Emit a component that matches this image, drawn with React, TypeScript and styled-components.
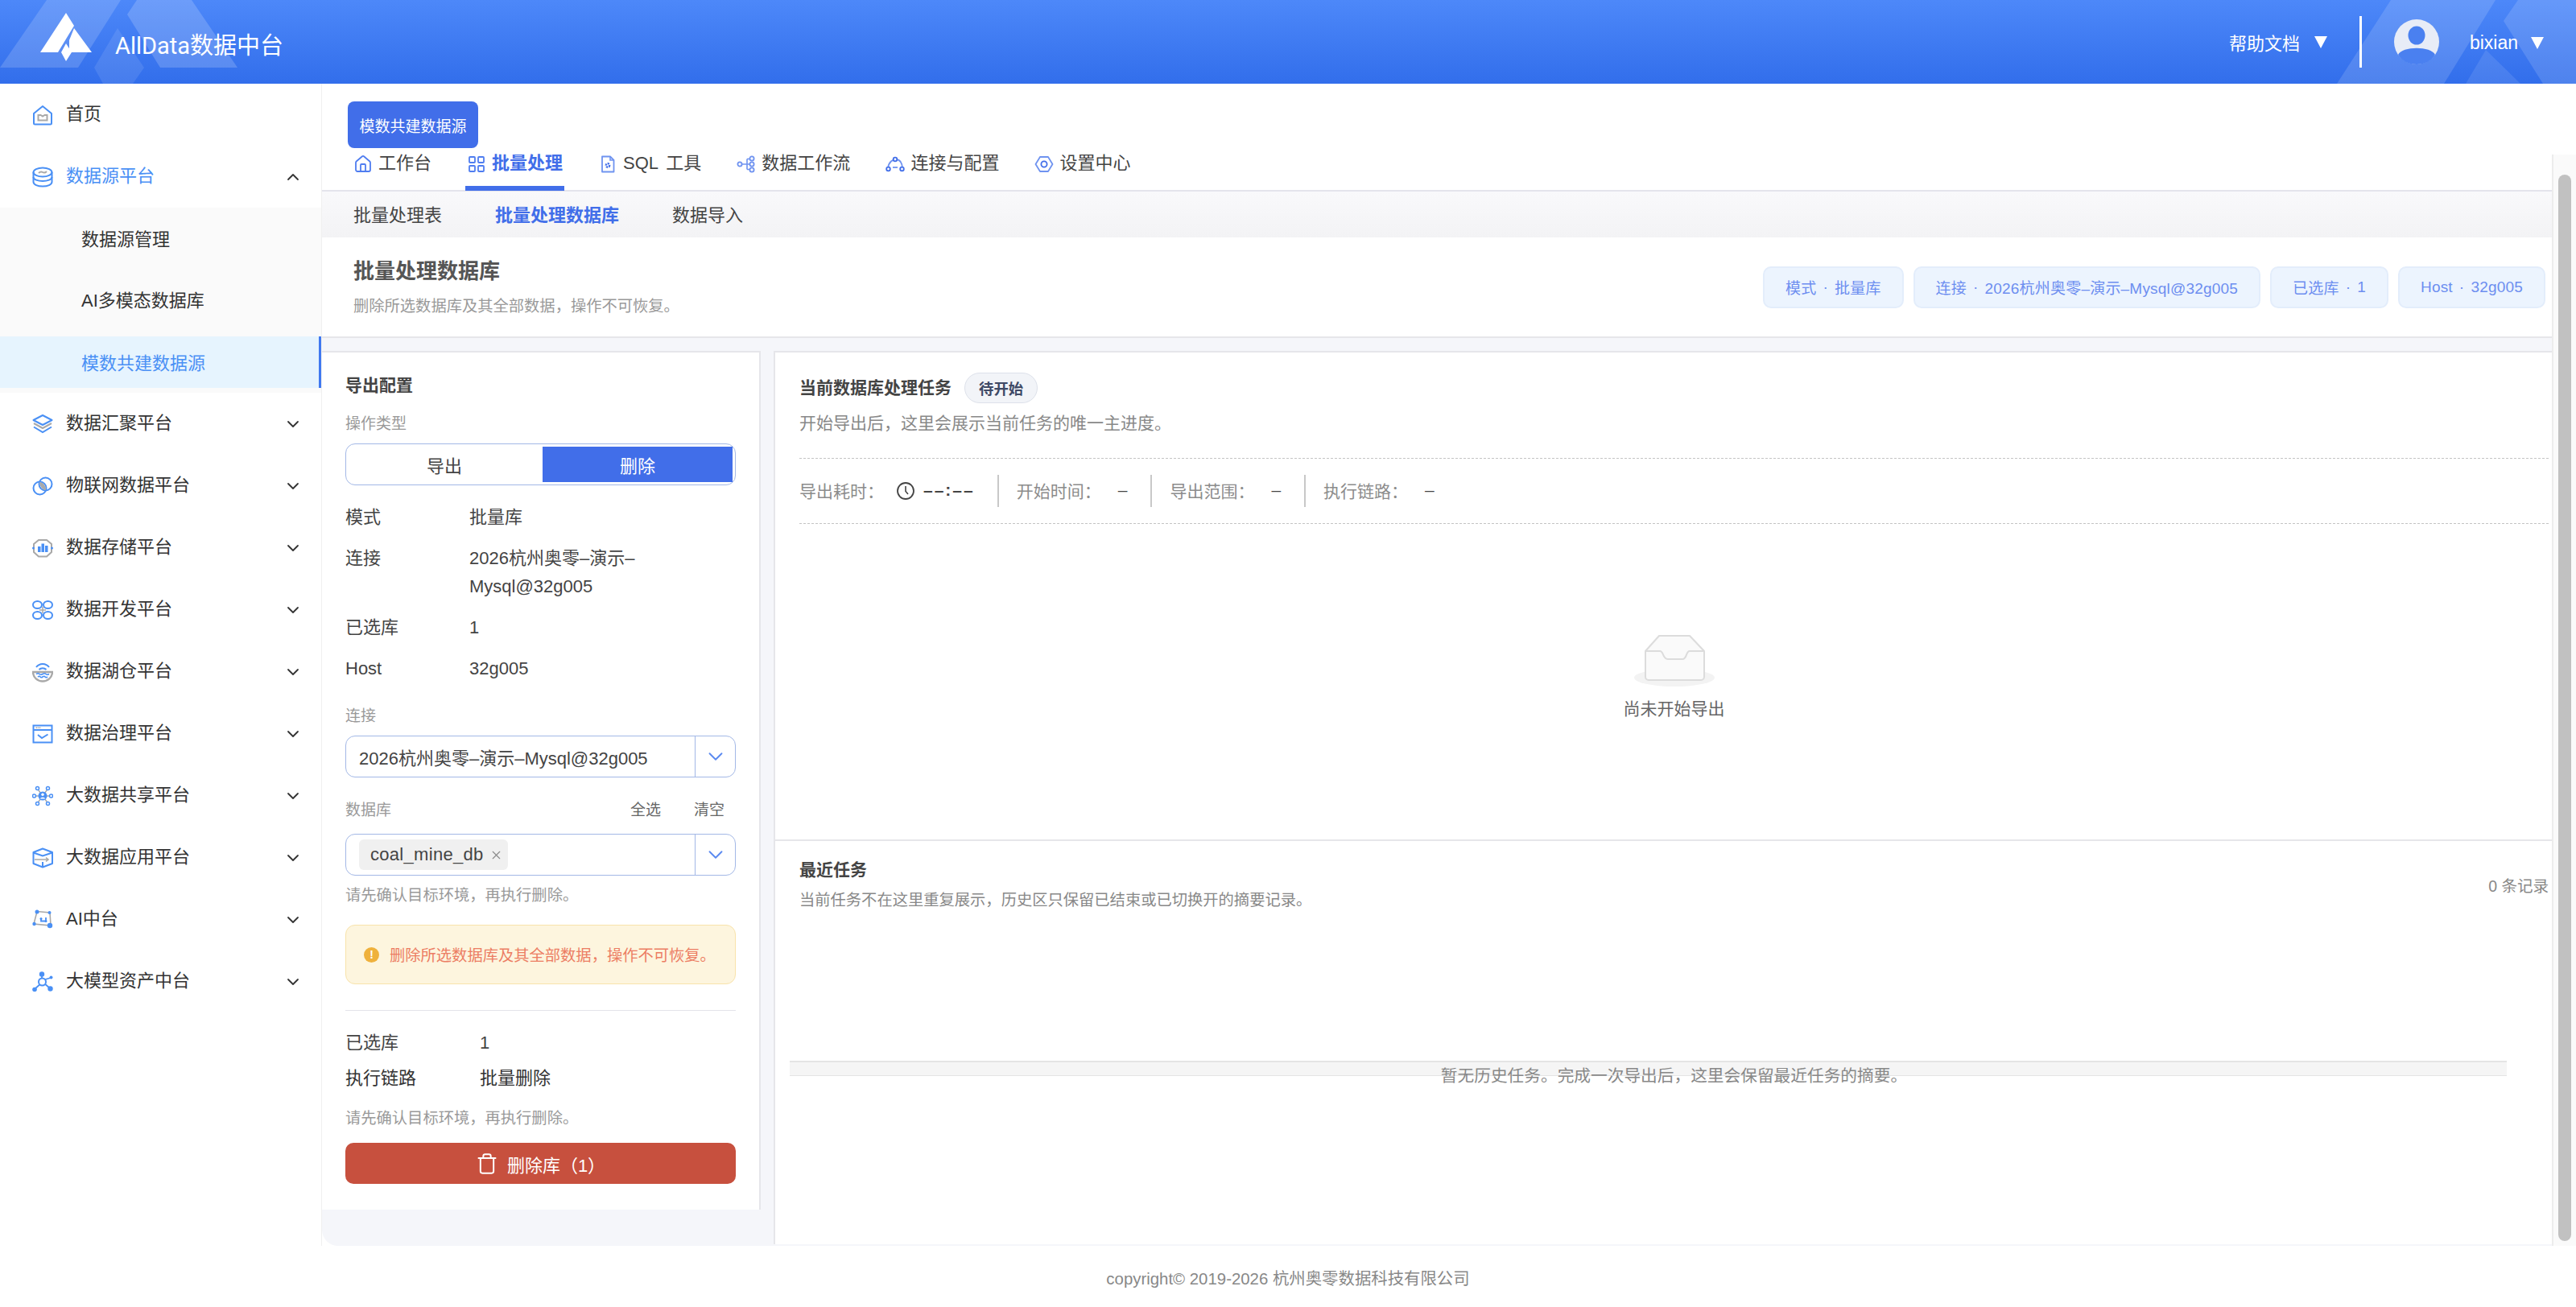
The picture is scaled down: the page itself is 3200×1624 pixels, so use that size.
import React from 'react'
import styled, { createGlobalStyle } from 'styled-components'
import { House, LayoutGrid, ChevronDown, ChevronUp, Trash, X } from 'lucide-react'

const FONT = `"Liberation Sans", "Noto Sans CJK SC", sans-serif`
const BLUE = '#4a90f5'
const GRAY = '#a9a9a9'

const GlobalStyle = createGlobalStyle`
  html, body {
    margin: 0;
    padding: 0;
    background: #fff;
    font-family: ${FONT};
  }
  * {
    box-sizing: border-box;
  }
`

const sideIcons: Record<string, React.ReactNode> = {
  home: (
    <>
      <path d="M2 11 L13 2 L24 11 V23 a1.5 1.5 0 0 1 -1.5 1.5 H3.5 A1.5 1.5 0 0 1 2 23 Z" fill="none" stroke={BLUE} strokeWidth="2" strokeLinejoin="round" />
      <path d="M7.5 13 h3 l2.5 1.5 l2.5 -1.5 h3 v6.5 h-11 Z" fill="none" stroke={GRAY} strokeWidth="2" />
    </>
  ),
  db: (
    <>
      <ellipse cx="13" cy="7" rx="11.5" ry="5.5" fill="none" stroke={BLUE} strokeWidth="2" />
      <path d="M8 8 q2.5 -2.5 5 -1 t5 -1" fill="none" stroke={GRAY} strokeWidth="2" />
      <path d="M1.5 7 V13 C1.5 16 7 18 13 18 S24.5 16 24.5 13 V7" fill="none" stroke={BLUE} strokeWidth="2" />
      <path d="M1.5 13 V19 C1.5 22.5 7 24.5 13 24.5 S24.5 22.5 24.5 19 V13" fill="none" stroke={BLUE} strokeWidth="2" />
    </>
  ),
  layers: (
    <>
      <path d="M13 2 L24.5 8 L13 14 L1.5 8 Z" fill="none" stroke={BLUE} strokeWidth="2" strokeLinejoin="round" />
      <path d="M2 12 L13 18 L24 12" fill="none" stroke={GRAY} strokeWidth="2" />
      <path d="M2 16.5 L13 23 L24 16.5" fill="none" stroke={BLUE} strokeWidth="2" />
    </>
  ),
  iot: (
    <>
      <circle cx="9.5" cy="15.5" r="8" fill="none" stroke={BLUE} strokeWidth="2" />
      <circle cx="16.5" cy="10.5" r="8" fill="none" stroke={BLUE} strokeWidth="2" />
      <path d="M9 8 C13 8 17 12 17 18 C13 18 9 13 9 8 Z" fill={GRAY} />
    </>
  ),
  storage: (
    <>
      <path d="M8 3 H18 L24 8 V18 L18 23.5 H8 L2 18 V8 Z" fill="none" stroke={GRAY} strokeWidth="2" />
      <rect x="7" y="11" width="3.5" height="7" fill={BLUE} />
      <rect x="11.5" y="7.5" width="3.5" height="10.5" fill={BLUE} />
      <rect x="16" y="10" width="3.5" height="8" fill={BLUE} />
      <circle cx="1.5" cy="13" r="1.5" fill={BLUE} />
      <circle cx="24.5" cy="13" r="1.5" fill={BLUE} />
    </>
  ),
  dev: (
    <>
      <ellipse cx="6.5" cy="6.5" rx="5.5" ry="4.5" fill="none" stroke={BLUE} strokeWidth="2" />
      <ellipse cx="19.5" cy="6.5" rx="5.5" ry="4.5" fill="none" stroke={BLUE} strokeWidth="2" />
      <ellipse cx="6.5" cy="19.5" rx="5.5" ry="4.5" fill="none" stroke={BLUE} strokeWidth="2" />
      <ellipse cx="19.5" cy="19.5" rx="5.5" ry="4.5" fill="none" stroke={BLUE} strokeWidth="2" />
      <path d="M13 9 V17 M9 13 H17" stroke={GRAY} strokeWidth="1.5" />
    </>
  ),
  lake: (
    <>
      <path d="M5 7 C9 1.5 17 1.5 21 7" fill="none" stroke={BLUE} strokeWidth="2" />
      <path d="M8.5 10 C11 7.5 15 7.5 17.5 10" fill="none" stroke={BLUE} strokeWidth="2" />
      <path d="M1 13 H25 C25 20 19 24.5 13 24.5 S1 20 1 13 Z" fill="none" stroke={GRAY} strokeWidth="2.4" />
      <path d="M5 15.5 q2.5 -1.5 4 0 t4 0 t4 0 t4 0" fill="none" stroke={BLUE} strokeWidth="1.6" />
      <path d="M7 19 q2 -1.5 3 0 t3 0 t3 0 t3 0" fill="none" stroke={BLUE} strokeWidth="1.6" />
    </>
  ),
  govern: (
    <>
      <rect x="1.5" y="2.5" width="23" height="21" fill="none" stroke={BLUE} strokeWidth="2" />
      <path d="M2 8 H24" stroke={BLUE} strokeWidth="2" />
      <path d="M4.5 5.3 H11" stroke={GRAY} strokeWidth="1.6" strokeDasharray="2 1" />
      <path d="M7 14 L12 18 L19.5 13.5" fill="none" stroke={BLUE} strokeWidth="2" />
    </>
  ),
  share: (
    <>
      <path d="M13 13 L6.5 4 M13 13 L19.5 4 M13 13 L3 13 M13 13 L23 13 M13 13 L6.5 22 M13 13 L19.5 22" stroke={GRAY} strokeWidth="1.4" />
      <circle cx="13" cy="13" r="5.5" fill={BLUE} />
      <circle cx="13" cy="11.3" r="1.7" fill="#fff" />
      <path d="M9.8 16.5 C10.5 14 15.5 14 16.2 16.5" fill="#fff" />
      {[[6.5, 3.5], [19.5, 3.5], [2.5, 13], [23.5, 13], [6.5, 22.5], [19.5, 22.5]].map(([cx, cy]) => (
        <circle key={`${cx}-${cy}`} cx={cx} cy={cy} r="2" fill="#fff" stroke={BLUE} strokeWidth="1.5" />
      ))}
    </>
  ),
  box: (
    <>
      <path d="M13 1.5 L25 6 V20 L13 24.5 L1.5 20 V6 Z" fill="none" stroke={BLUE} strokeWidth="2" strokeLinejoin="round" />
      <path d="M1.5 6.5 L13 10.5 L25 6.5 M13 18 V24" fill="none" stroke={BLUE} strokeWidth="2" />
      <path d="M3 15 H20 M17 12.5 L20 15 L17 17.5" fill="none" stroke={GRAY} strokeWidth="1.6" />
    </>
  ),
  ai: (
    <>
      <path d="M6 2.5 L22 4 L23 20 L2 18 Z" fill="none" stroke={GRAY} strokeWidth="1.6" />
      <path d="M11 12 L11 14.5 L17 14.5 L17 10" fill="none" stroke={BLUE} strokeWidth="1.8" />
      <circle cx="6" cy="3" r="2.5" fill={BLUE} />
      <circle cx="21.5" cy="4" r="2" fill={BLUE} />
      <circle cx="2.5" cy="18" r="2.2" fill={BLUE} />
      <circle cx="22" cy="20" r="3.2" fill={BLUE} />
      <circle cx="11" cy="11.5" r="1.5" fill={BLUE} />
      <circle cx="17" cy="14.5" r="1.5" fill={BLUE} />
    </>
  ),
  model: (
    <>
      <path d="M12 12 L12 4 M12 14 L3 22 M14 14 L22 21 M16 10 L23 8" stroke={BLUE} strokeWidth="1.8" />
      <circle cx="12.5" cy="13" r="4.5" fill="#fff" stroke={BLUE} strokeWidth="2" />
      <circle cx="12" cy="3.5" r="3.2" fill={BLUE} />
      <circle cx="3" cy="22.5" r="2.8" fill={BLUE} />
      <circle cx="22.5" cy="21.5" r="3.2" fill={BLUE} />
      <circle cx="23.5" cy="7.5" r="2" fill={BLUE} />
    </>
  ),
}

const navGroups = [
  { key: 'layers', label: '数据汇聚平台' },
  { key: 'iot', label: '物联网数据平台' },
  { key: 'storage', label: '数据存储平台' },
  { key: 'dev', label: '数据开发平台' },
  { key: 'lake', label: '数据湖仓平台' },
  { key: 'govern', label: '数据治理平台' },
  { key: 'share', label: '大数据共享平台' },
  { key: 'box', label: '大数据应用平台' },
  { key: 'ai', label: 'AI中台' },
  { key: 'model', label: '大模型资产中台' },
]

const SideIcon = ({ name }: { name: string }) => (
  <NavIcon viewBox="0 0 26 26">{sideIcons[name]}</NavIcon>
)

const DownCaret = () => <Caret />

const Sidebar = () => (
  <SideBar>
    <NavItem>
      <SideIcon name="home" />
      <span>首页</span>
    </NavItem>
    <NavItem $open>
      <SideIcon name="db" />
      <span>数据源平台</span>
      <Chevron as={ChevronUp} size={24} strokeWidth={1.8} />
    </NavItem>
    <SubMenu>
      <SubItem>数据源管理</SubItem>
      <SubItem>AI多模态数据库</SubItem>
      <SubItem $active>模数共建数据源</SubItem>
    </SubMenu>
    {navGroups.map((g) => (
      <NavItem key={g.key}>
        <SideIcon name={g.key} />
        <span>{g.label}</span>
        <Chevron as={ChevronDown} size={24} strokeWidth={1.8} />
      </NavItem>
    ))}
  </SideBar>
)

const TabFileIcon = () => (
  <TabSvg viewBox="0 0 24 24">
    <path d="M5 2.5 H15 L19.5 7 V21.5 H5 Z" fill="none" stroke="#6f93f0" strokeWidth="1.8" strokeLinejoin="round" />
    <path d="M15 2.5 V7 H19.5" fill="none" stroke="#6f93f0" strokeWidth="1.6" />
    <circle cx="12" cy="13.5" r="2.2" fill="none" stroke="#416ee9" strokeWidth="2.4" strokeDasharray="2 1" />
  </TabSvg>
)

const TabFlowIcon = () => (
  <TabSvg viewBox="0 0 24 24">
    <circle cx="4" cy="12" r="2.6" fill="none" stroke="#6f93f0" strokeWidth="1.8" />
    <path d="M7 12 H13 M13 5.5 V18.5 M13 5.5 H16 M13 18.5 H16 M13 12 H16" fill="none" stroke="#6f93f0" strokeWidth="1.6" />
    <circle cx="19" cy="5" r="2.6" fill="none" stroke="#6f93f0" strokeWidth="1.8" />
    <circle cx="19" cy="12" r="2.6" fill="none" stroke="#6f93f0" strokeWidth="1.8" />
    <circle cx="19" cy="19" r="2.6" fill="none" stroke="#6f93f0" strokeWidth="1.8" />
  </TabSvg>
)

const TabLinkIcon = () => (
  <TabSvg viewBox="0 0 24 24">
    <path d="M3 17 C4 9 9 6 13 6 C18 6 21 11 21 17" fill="none" stroke="#6f93f0" strokeWidth="1.8" />
    <circle cx="3.5" cy="18" r="2.3" fill="#fff" stroke="#416ee9" strokeWidth="1.8" />
    <circle cx="12" cy="6" r="2.3" fill="#fff" stroke="#416ee9" strokeWidth="1.8" />
    <circle cx="20.5" cy="18" r="2.3" fill="#fff" stroke="#416ee9" strokeWidth="1.8" />
    <path d="M9 16 H15" stroke="#6f93f0" strokeWidth="1.8" />
  </TabSvg>
)

const TabGearIcon = () => (
  <TabSvg viewBox="0 0 24 24">
    <path d="M7 3 H17 L22.5 12 L17 21 H7 L1.5 12 Z" fill="none" stroke="#6f93f0" strokeWidth="1.8" strokeLinejoin="round" />
    <circle cx="12" cy="12" r="3.6" fill="none" stroke="#416ee9" strokeWidth="1.8" />
  </TabSvg>
)

const ClockIcon = () => (
  <ClockSvg viewBox="0 0 24 24">
    <circle cx="12" cy="12" r="10" fill="none" stroke="#444" strokeWidth="1.8" />
    <path d="M12 6 V12.5 L15 16" fill="none" stroke="#444" strokeWidth="1.6" />
  </ClockSvg>
)

const EmptyBox = () => (
  <svg width="100" height="64" viewBox="0 0 100 64">
    <ellipse cx="50" cy="53" rx="50" ry="11" fill="#f3f3f3" />
    <path d="M14 20 L31 1 H69 L87 20 V52 a4 4 0 0 1 -4 4 H18 a4 4 0 0 1 -4 -4 Z" fill="#fafafa" stroke="#dcdcdc" strokeWidth="2" strokeLinejoin="round" />
    <path d="M14 20 H32 C37 20 35 30 42 30 H60 C66 30 64 20 69 20 H87" fill="none" stroke="#dcdcdc" strokeWidth="2" />
  </svg>
)

const PillText = ({ label, value }: { label: string; value: string }) => (
  <Pill>
    {label}
    <PillDot>·</PillDot>
    {value}
  </Pill>
)

const App: React.FC = () => {
  return (
    <Page>
      <GlobalStyle />
      <Header>
        <HeaderDecor viewBox="0 0 3200 104" preserveAspectRatio="none">
          <path d="M0 84 L58 0 H150 L97 84 Z" fill="#fff" opacity="0.16" />
          <path d="M158 18 L170 0 H238 L295 84 H199 Z" fill="#fff" opacity="0.18" />
          <path d="M146 35 L179 84 L165 104 H128 L117 84 Z" fill="#fff" opacity="0.1" />
          <path d="M2970 0 H3100 L3036 104 H2903 Z" fill="#fff" opacity="0.14" />
          <path d="M3128 0 H3200 V104 H3159 L3110 26 Z" fill="#fff" opacity="0.14" />
          <path d="M3063 104 L3088 62 L3131 104 Z" fill="#fff" opacity="0.1" />
        </HeaderDecor>
        <Brand>
          <svg width="64" height="60" viewBox="50 16 64 60">
            <path d="M82 16 L92 32 L72 65 H50 Z M92 35 L114 65 H86 V50 Z M82 54 L89 65 L82 76 L76 65 Z" fill="#fff" />
          </svg>
          <BrandName>AllData数据中台</BrandName>
        </Brand>
        <HeaderRight>
          <HeadLink>
            帮助文档
            <DownCaret />
          </HeadLink>
          <HeadDivider />
          <svg width="56" height="56" viewBox="0 0 56 56">
            <circle cx="28" cy="28" r="28" fill="#e8ecf7" />
            <ellipse cx="28" cy="20" rx="10.5" ry="11.5" fill="#4a80f0" />
            <path d="M5 44 C10 33 46 33 51 44 C46 52 38 56 28 56 C18 56 10 52 5 44 Z" fill="#4a80f0" />
          </svg>
          <HeadUser>
            bixian
            <DownCaret />
          </HeadUser>
        </HeaderRight>
      </Header>
      <Body>
        <Sidebar />
        <Main>
          <TagRow>
            <ViewTag>模数共建数据源</ViewTag>
          </TagRow>
          <Scroller>
            <ScrollBody>
              <Tabs>
                <Tab>
                  <TabIconSlot as={House} size={24} strokeWidth={1.8} />
                  工作台
                </Tab>
                <Tab $active>
                  <TabIconSlot as={LayoutGrid} size={24} strokeWidth={1.8} />
                  批量处理
                </Tab>
                <Tab>
                  <TabFileIcon />
                  SQL 工具
                </Tab>
                <Tab>
                  <TabFlowIcon />
                  数据工作流
                </Tab>
                <Tab>
                  <TabLinkIcon />
                  连接与配置
                </Tab>
                <Tab>
                  <TabGearIcon />
                  设置中心
                </Tab>
              </Tabs>
              <SubTabs>
                <SubTab>批量处理表</SubTab>
                <SubTab $active>批量处理数据库</SubTab>
                <SubTab>数据导入</SubTab>
              </SubTabs>
              <TitleBar>
                <div>
                  <PageTitle>批量处理数据库</PageTitle>
                  <PageDesc>删除所选数据库及其全部数据，操作不可恢复。</PageDesc>
                </div>
                <Pills>
                  <PillText label="模式" value="批量库" />
                  <PillText label="连接" value="2026杭州奥零–演示–Mysql@32g005" />
                  <PillText label="已选库" value="1" />
                  <PillText label="Host" value="32g005" />
                </Pills>
              </TitleBar>
              <Content>
                <ConfigPanel>
                  <PanelTitle>导出配置</PanelTitle>
                  <FieldLabel $top={21}>操作类型</FieldLabel>
                  <Segment>
                    <SegmentItem>导出</SegmentItem>
                    <SegmentItem $active>删除</SegmentItem>
                  </Segment>
                  <InfoList>
                    <InfoRow><span>模式</span><span>批量库</span></InfoRow>
                    <InfoRow><span>连接</span><span>2026杭州奥零–演示–Mysql@32g005</span></InfoRow>
                    <InfoRow><span>已选库</span><span>1</span></InfoRow>
                    <InfoRow><span>Host</span><span>32g005</span></InfoRow>
                  </InfoList>
                  <FieldLabel $top={29}>连接</FieldLabel>
                  <SelectBox $top={11}>
                    <SelectValue>2026杭州奥零–演示–Mysql@32g005</SelectValue>
                    <SelectArrow><ChevronDown size={30} strokeWidth={1.5} color="#5b8af0" /></SelectArrow>
                  </SelectBox>
                  <FieldHead>
                    <FieldLabel $top={0}>数据库</FieldLabel>
                    <FieldActions>
                      <span>全选</span>
                      <span>清空</span>
                    </FieldActions>
                  </FieldHead>
                  <SelectBox $top={16}>
                    <SelectValue>
                      <DbTag>
                        coal_mine_db
                        <X size={17} strokeWidth={1.6} color="#888" />
                      </DbTag>
                    </SelectValue>
                    <SelectArrow><ChevronDown size={30} strokeWidth={1.5} color="#5b8af0" /></SelectArrow>
                  </SelectBox>
                  <Hint $top={12}>请先确认目标环境，再执行删除。</Hint>
                  <Warning>
                    <WarningDot>!</WarningDot>
                    删除所选数据库及其全部数据，操作不可恢复。
                  </Warning>
                  <Divider />
                  <SummaryRow $top={22}><span>已选库</span><span>1</span></SummaryRow>
                  <SummaryRow $top={9} $strong><span>执行链路</span><span>批量删除</span></SummaryRow>
                  <Hint $top={20}>请先确认目标环境，再执行删除。</Hint>
                  <DeleteButton>
                    <Trash size={28} strokeWidth={1.7} />
                    删除库（1）
                  </DeleteButton>
                </ConfigPanel>
                <TaskPanel>
                  <ActiveTask>
                    <TaskHead>
                      <SectionTitle>当前数据库处理任务</SectionTitle>
                      <StatusBadge>待开始</StatusBadge>
                    </TaskHead>
                    <TaskDesc>开始导出后，这里会展示当前任务的唯一主进度。</TaskDesc>
                    <MetaRow>
                      <MetaItem>
                        导出耗时：
                        <ClockIcon />
                        <MetaValue $tight>––:––</MetaValue>
                      </MetaItem>
                      <MetaItem>开始时间：<MetaValue>–</MetaValue></MetaItem>
                      <MetaItem>导出范围：<MetaValue>–</MetaValue></MetaItem>
                      <MetaItem>执行链路：<MetaValue>–</MetaValue></MetaItem>
                    </MetaRow>
                    <EmptyState>
                      <EmptyBox />
                      <EmptyText>尚未开始导出</EmptyText>
                    </EmptyState>
                  </ActiveTask>
                  <RecentTask>
                    <RecentHead>
                      <div>
                        <SectionTitle>最近任务</SectionTitle>
                        <RecentDesc>当前任务不在这里重复展示，历史区只保留已结束或已切换开的摘要记录。</RecentDesc>
                      </div>
                      <RecentCount>0 条记录</RecentCount>
                    </RecentHead>
                    <TableBar />
                    <TableEmpty>暂无历史任务。完成一次导出后，这里会保留最近任务的摘要。</TableEmpty>
                  </RecentTask>
                </TaskPanel>
              </Content>
            </ScrollBody>
            <ScrollTrack>
              <ScrollThumb />
            </ScrollTrack>
          </Scroller>
          <Footer>copyright© 2019-2026 杭州奥零数据科技有限公司</Footer>
        </Main>
      </Body>
    </Page>
  )
}

const Page = styled.div`
  width: 3200px;
  height: 1624px;
  display: flex;
  flex-direction: column;
  overflow: hidden;
  background: #fff;
`

const Header = styled.header`
  position: relative;
  height: 104px;
  flex: none;
  display: flex;
  align-items: center;
  justify-content: space-between;
  padding: 0 40px 0 50px;
  background: linear-gradient(180deg, #4d88f9 0%, #326eeb 100%);
  color: #fff;
`

const HeaderDecor = styled.svg`
  position: absolute;
  inset: 0;
  width: 100%;
  height: 100%;
`

const Brand = styled.div`
  position: relative;
  display: flex;
  align-items: flex-start;
  gap: 29px;
  height: 60px;
  align-self: flex-start;
  margin-top: 16px;
`

const BrandName = styled.div`
  font-family: Roboto, "Noto Sans CJK SC", sans-serif;
  font-size: 29px;
  line-height: 40px;
  margin-top: 21px;
`

const HeaderRight = styled.div`
  position: relative;
  display: flex;
  align-items: center;
  font-size: 22px;
`

const HeadLink = styled.div`
  display: flex;
  align-items: center;
  gap: 18px;
`

const HeadDivider = styled.div`
  width: 3px;
  height: 64px;
  background: #fff;
  margin: 0 40px;
`

const HeadUser = styled.div`
  display: flex;
  align-items: center;
  gap: 16px;
  margin: 2px 0 0 38px;
  font-size: 23px;
`

const Caret = styled.i`
  display: block;
  width: 0;
  height: 0;
  border-left: 8px solid transparent;
  border-right: 8px solid transparent;
  border-top: 15px solid #fff;
`

const Body = styled.div`
  flex: 1;
  display: flex;
  min-height: 0;
`

const SideBar = styled.nav`
  width: 400px;
  height: 1444px;
  flex: none;
  border-right: 1px solid #f0f0f0;
  color: #333;
  font-size: 22px;
`

const NavItem = styled.div<{ $open?: boolean }>`
  height: 77px;
  display: flex;
  align-items: center;
  gap: 16px;
  padding: 0 23px 0 40px;
  line-height: 30px;
  color: ${(props) => (props.$open ? BLUE : '#333')};

  span {
    flex: 1;
    padding-bottom: 2px;
  }
`

const NavIcon = styled.svg`
  width: 26px;
  height: 26px;
  flex: none;
`

const Chevron = styled.svg`
  color: #333;
  flex: none;
`

const SubMenu = styled.div`
  background: #fafafa;
  padding-bottom: 6px;
`

const SubItem = styled.div<{ $active?: boolean }>`
  height: ${(props) => (props.$active ? '64px' : '76px')};
  margin-top: ${(props) => (props.$active ? '8px' : '0')};
  display: flex;
  align-items: center;
  padding: 0 0 3px 101px;
  color: ${(props) => (props.$active ? BLUE : '#333')};
  background: ${(props) => (props.$active ? '#e6f4fe' : 'transparent')};
  border-right: ${(props) => (props.$active ? '3px solid #3f78f0' : 'none')};
`

const Main = styled.main`
  flex: 1;
  min-width: 0;
  display: flex;
  flex-direction: column;
`

const TagRow = styled.div`
  height: 88px;
  flex: none;
  padding: 22px 0 0 32px;
`

const ViewTag = styled.div`
  width: 162px;
  height: 58px;
  display: flex;
  align-items: center;
  justify-content: center;
  background: #416ee9;
  border-radius: 8px;
  color: #fff;
  font-size: 19px;
  white-space: nowrap;
`

const Scroller = styled.div`
  height: 1356px;
  flex: none;
  display: flex;
`

const ScrollBody = styled.div`
  flex: 1;
  min-width: 0;
  display: flex;
  flex-direction: column;
`

const ScrollTrack = styled.div`
  width: 30px;
  flex: none;
  background: #fafafa;
  border-left: 2px solid #ececec;
  padding: 25px 6px 6px;
`

const ScrollThumb = styled.div`
  height: 100%;
  background: #c1c1c1;
  border-radius: 8px;
`

const Tabs = styled.div`
  height: 46px;
  flex: none;
  display: flex;
  gap: 40px;
  padding-left: 37px;
  border-bottom: 2px solid #e4e4ec;
  font-size: 22px;
  word-spacing: 4px;
`

const Tab = styled.div<{ $active?: boolean }>`
  height: 45px;
  display: flex;
  align-items: flex-start;
  gap: 7px;
  padding: 0 2px;
  line-height: 22px;
  color: ${(props) => (props.$active ? '#416ee9' : '#444')};
  font-weight: ${(props) => (props.$active ? 700 : 400)};
  border-bottom: 6px solid ${(props) => (props.$active ? '#416ee9' : 'transparent')};
  white-space: nowrap;
`

const TabSvg = styled.svg`
  width: 24px;
  height: 24px;
  flex: none;
`

const TabIconSlot = styled.svg`
  width: 24px;
  height: 24px;
  flex: none;
  color: #4f7df0;
`

const SubTabs = styled.div`
  height: 57px;
  flex: none;
  display: flex;
  align-items: center;
  gap: 66px;
  padding: 0 0 4px 39px;
  background: linear-gradient(180deg, #f9f9fb 0%, #f3f3f5 100%);
  font-size: 22px;
`

const SubTab = styled.div<{ $active?: boolean }>`
  color: ${(props) => (props.$active ? '#416ee9' : '#444')};
  font-weight: ${(props) => (props.$active ? 700 : 400)};
`

const TitleBar = styled.div`
  height: 125px;
  flex: none;
  display: flex;
  align-items: center;
  justify-content: space-between;
  padding: 1px 8px 0 39px;
  background: #fff;
  border-bottom: 2px solid #e6e6ea;
`

const PageTitle = styled.div`
  font-size: 26px;
  line-height: 34px;
  font-weight: 700;
  color: #555;
`

const PageDesc = styled.div`
  margin-top: 13px;
  font-size: 19.3px;
  line-height: 28px;
  color: #999;
`

const Pills = styled.div`
  display: flex;
  gap: 12px;
  margin-top: -1px;
`

const Pill = styled.div`
  height: 52px;
  display: flex;
  align-items: center;
  padding: 0 26px;
  background: #ecf4fe;
  border: 2px solid #e3edfb;
  border-radius: 10px;
  color: #6d8ef0;
  font-size: 19px;
  letter-spacing: 0.2px;
  white-space: nowrap;
`

const PillDot = styled.span`
  margin: 0 8px;
`

const Content = styled.div`
  flex: 1;
  min-height: 0;
  display: flex;
  align-items: flex-start;
  gap: 16px;
  padding-top: 16px;
  background: #f5f6fa;
  border-bottom-left-radius: 20px;
`

const ConfigPanel = styled.section`
  width: 545px;
  flex: none;
  display: flex;
  flex-direction: column;
  padding: 27px 29px 32px;
  background: #fff;
  border-top: 2px solid #e6e6ea;
  border-right: 2px solid #e6e6ea;
`

const PanelTitle = styled.div`
  font-size: 21px;
  line-height: 28px;
  font-weight: 700;
  color: #444;
`

const FieldLabel = styled.div<{ $top: number }>`
  margin-top: ${(props) => props.$top}px;
  font-size: 19px;
  line-height: 26px;
  color: #999;
`

const Segment = styled.div`
  height: 52px;
  margin-top: 11px;
  display: flex;
  padding: 3px 3px 3px 0;
  border: 1px solid #a3b8e6;
  border-radius: 12px;
`

const SegmentItem = styled.div<{ $active?: boolean }>`
  flex: ${(props) => (props.$active ? 1 : '0 0 244px')};
  display: flex;
  align-items: center;
  justify-content: center;
  font-size: 22px;
  color: ${(props) => (props.$active ? '#fff' : '#444')};
  background: ${(props) => (props.$active ? '#416ee9' : 'transparent')};
`

const InfoList = styled.div`
  margin-top: 22px;
  display: flex;
  flex-direction: column;
  gap: 16px;
`

const InfoRow = styled.div`
  display: grid;
  grid-template-columns: 154px 1fr;
  font-size: 22px;
  line-height: 35px;
  color: #444;
`

const SelectBox = styled.div<{ $top: number }>`
  height: 52px;
  margin-top: ${(props) => props.$top}px;
  display: flex;
  border: 1px solid #a3b8e6;
  border-radius: 12px;
`

const SelectValue = styled.div`
  flex: 1;
  min-width: 0;
  display: flex;
  align-items: center;
  padding-left: 16px;
  font-size: 22px;
  color: #444;
  white-space: nowrap;
`

const SelectArrow = styled.div`
  width: 50px;
  flex: none;
  display: flex;
  align-items: center;
  justify-content: center;
  border-left: 1px solid #a3b8e6;
`

const FieldHead = styled.div`
  margin-top: 28px;
  display: flex;
  justify-content: space-between;
  padding-right: 14px;
`

const FieldActions = styled.div`
  display: flex;
  gap: 41px;
  font-size: 19px;
  line-height: 26px;
  color: #666;
`

const DbTag = styled.div`
  height: 38px;
  display: flex;
  align-items: center;
  gap: 7px;
  padding: 0 6px 0 14px;
  background: #f0f0f0;
  border-radius: 6px;
  font-size: 22px;
  letter-spacing: 0.3px;
  color: #444;
`

const Hint = styled.div<{ $top: number }>`
  margin-top: ${(props) => props.$top}px;
  font-size: 19.3px;
  line-height: 26px;
  color: #999;
`

const Warning = styled.div`
  height: 74px;
  margin-top: 23px;
  display: flex;
  align-items: center;
  gap: 13px;
  padding-left: 22px;
  background: #fdf5de;
  border: 1px solid #f8e3ab;
  border-radius: 12px;
  font-size: 19.3px;
  color: #ec7d63;
  white-space: nowrap;
`

const WarningDot = styled.div`
  width: 19px;
  height: 19px;
  flex: none;
  display: flex;
  align-items: center;
  justify-content: center;
  border-radius: 50%;
  background: #efb13c;
  color: #fff;
  font-size: 14px;
  font-weight: 700;
`

const Divider = styled.div`
  height: 1px;
  margin-top: 32px;
  background: #e4e4ea;
`

const SummaryRow = styled.div<{ $top: number; $strong?: boolean }>`
  margin-top: ${(props) => props.$top}px;
  display: grid;
  grid-template-columns: 167px 1fr;
  font-size: 22px;
  line-height: 35px;
  color: ${(props) => (props.$strong ? '#333' : '#444')};
`

const DeleteButton = styled.button`
  height: 51px;
  margin-top: 17px;
  display: flex;
  align-items: center;
  justify-content: center;
  gap: 11px;
  border: none;
  border-radius: 10px;
  background: #c7503e;
  color: #fff;
  font-family: ${FONT};
  font-size: 22px;
`

const TaskPanel = styled.section`
  flex: 1;
  min-width: 0;
  height: 1110px;
  background: #fff;
  border-top: 2px solid #e6e6ea;
  border-left: 2px solid #e6e6ea;
`

const ActiveTask = styled.div`
  height: 605px;
  padding: 25px 4px 0 30px;
`

const TaskHead = styled.div`
  display: flex;
  align-items: center;
  gap: 16px;
`

const SectionTitle = styled.div`
  font-size: 21px;
  line-height: 28px;
  font-weight: 700;
  color: #444;
`

const StatusBadge = styled.div`
  height: 38px;
  padding: 0 17px;
  display: flex;
  align-items: center;
  background: #f2f4f8;
  border: 1px solid #dde1ea;
  border-radius: 19px;
  font-size: 18.4px;
  font-weight: 700;
  color: #3f4a66;
`

const TaskDesc = styled.div`
  margin-top: 11px;
  font-size: 21px;
  line-height: 28px;
  color: #888;
`

const MetaRow = styled.div`
  height: 82px;
  margin-top: 29px;
  display: flex;
  align-items: center;
  border-top: 1px dashed #c4c4c4;
  border-bottom: 1px dashed #c4c4c4;
  font-size: 21px;
  color: #8c8c8c;
`

const MetaItem = styled.div`
  display: flex;
  align-items: center;
  height: 40px;
  white-space: nowrap;
  padding: 0 29px 2px 22px;
  border-left: 2px solid #c8c8c8;

  &:first-child {
    padding: 0 28px 2px 0;
    border-left: none;
  }
`

const ClockSvg = styled.svg`
  width: 24px;
  height: 24px;
  flex: none;
  margin: 2px 0 0 15px;
`

const MetaValue = styled.span<{ $tight?: boolean }>`
  color: #444;
  margin-left: ${(props) => (props.$tight ? '10px' : '21px')};
  font-weight: ${(props) => (props.$tight ? 700 : 400)};
  letter-spacing: ${(props) => (props.$tight ? '2px' : '0')};
`

const EmptyState = styled.div`
  margin-top: 138px;
  display: flex;
  flex-direction: column;
  align-items: center;
`

const EmptyText = styled.div`
  margin-top: 14px;
  font-size: 21px;
  line-height: 28px;
  color: #666;
`

const RecentTask = styled.div`
  border-top: 2px solid #e6e6ea;
  padding: 22px 4px 0 30px;
`

const RecentHead = styled.div`
  display: flex;
  align-items: center;
  justify-content: space-between;
`

const RecentDesc = styled.div`
  margin-top: 11px;
  font-size: 19.3px;
  line-height: 26px;
  color: #888;
`

const RecentCount = styled.div`
  font-size: 19.5px;
  color: #888;
`

const TableBar = styled.div`
  height: 19px;
  margin: 186px 52px 0 -12px;
  background: #f5f5f5;
  border-top: 2px solid #e4e4e4;
  border-bottom: 1px solid #e4e4e4;
`

const TableEmpty = styled.div`
  margin-top: -14px;
  text-align: center;
  font-size: 20.7px;
  line-height: 28px;
  color: #888;
`

const Footer = styled.footer`
  flex: 1;
  display: flex;
  align-items: center;
  justify-content: center;
  padding: 2px 400px 0 0;
  font-size: 20.4px;
  color: #888;
`

export default App
